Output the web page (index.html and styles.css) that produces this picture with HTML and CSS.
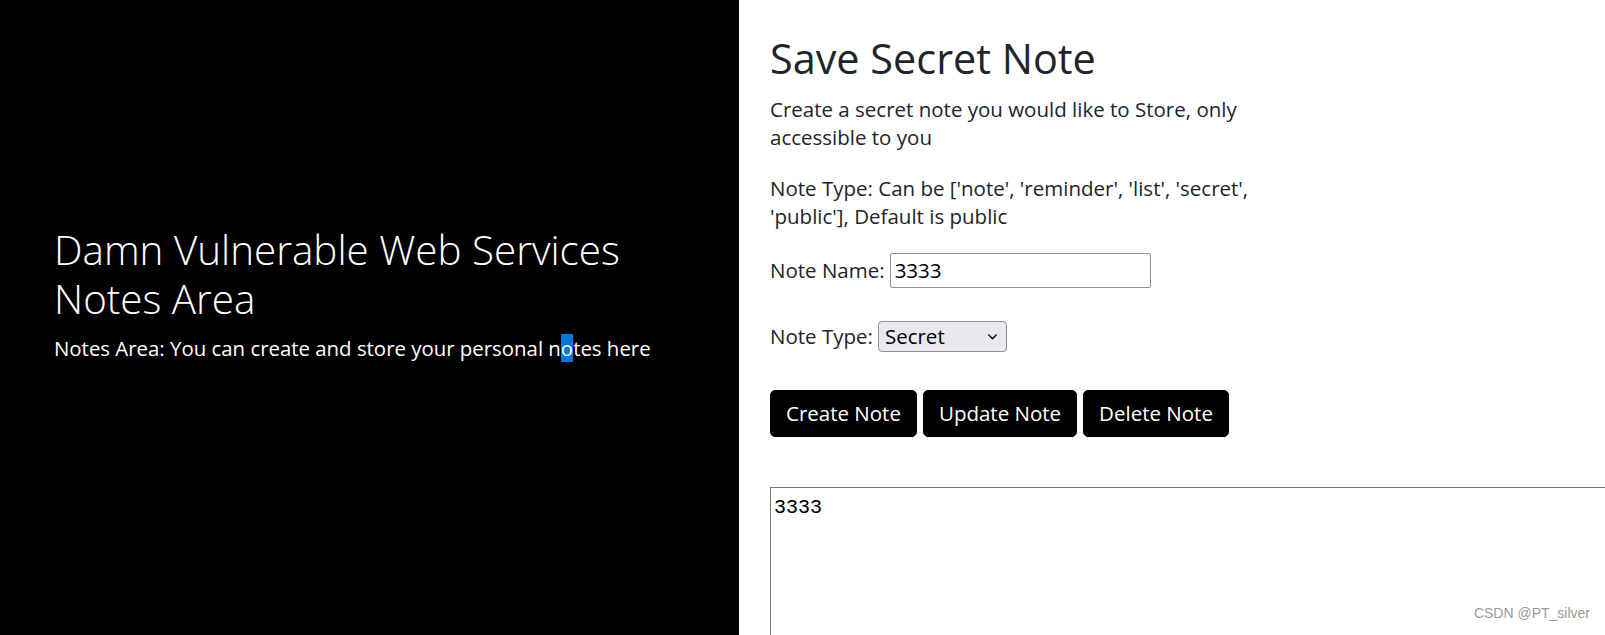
FILE: index.html
```html
<!DOCTYPE html>
<html>
<head>
  <link rel="stylesheet" href="styles.css">
</head>
<body>
  <div class="page">
    <div class="hero">
      <h1 class="hero-title">Damn Vulnerable Web Services Notes Area</h1>
      <p class="hero-lead">Notes Area: You can create and store your personal n<span class="sel">o</span>tes here</p>
    </div>

    <div class="main">
      <h2 class="title">Save Secret Note</h2>
      <p class="intro">Create a secret note you would like to Store, only accessible to you</p>
      <p class="intro">Note Type: Can be ['note', 'reminder', 'list', 'secret', 'public'], Default is public</p>

      <form class="note-form" onsubmit="return false">
        <div class="field">
          <label for="noteName">Note Name:</label>
          <input type="text" id="noteName" class="text-input" value="3333">
        </div>
        <div class="field field-type">
          <label for="noteType">Note Type:</label>
          <div class="select-wrap">
            <select id="noteType" class="select">
              <option value="note">Note</option>
              <option value="reminder">Reminder</option>
              <option value="list">List</option>
              <option value="secret" selected>Secret</option>
              <option value="public">Public</option>
            </select>
            <svg class="chevron" viewBox="0 0 12 12">
              <path d="M2.5 4.5l3.5 3.5 3.5-3.5"/>
            </svg>
          </div>
        </div>
        <div class="actions">
          <button class="btn">Create Note</button>
          <button class="btn">Update Note</button>
          <button class="btn">Delete Note</button>
        </div>
        <textarea class="note-body">3333</textarea>
      </form>
    </div>
  </div>

  <div class="watermark">CSDN @PT_silver</div>
</body>
</html>
```

FILE: styles.css
```css
* {
  box-sizing: border-box;
}

html,
body {
  height: 100%;
}

body {
  margin: 0;
  overflow: hidden;
  font-family: "Open Sans", "Noto Sans", sans-serif;
  font-size: 20.5px;
  line-height: 28.5px;
  color: #212529;
  background: #ffffff;
}

.page {
  display: flex;
  height: 100%;
}

/* left black panel */
.hero {
  flex: 0 0 739px;
  background: #000000;
  color: #ffffff;
  padding: 225px 40px 0 54px;
}

.hero-title {
  margin: 0 0 12px;
  font-size: 40.4px;
  font-weight: 300;
  line-height: 49px;
}

.hero-lead {
  margin: 0;
  font-size: 20.4px;
  line-height: 27px;
}

.sel {
  background: #0078d7;
  color: #ffffff;
}

/* right column */
.main {
  flex: 1;
  padding: 34px 0 0 31px;
}

.title {
  margin: 0 0 11px;
  font-size: 41.4px;
  font-weight: 400;
  line-height: 1.2;
}

.intro {
  width: 520px;
  margin: 0 0 22px;
}

.field {
  display: flex;
  align-items: center;
  gap: 5px;
  margin-bottom: 33px;
}

.text-input {
  width: 261px;
  height: 35px;
  padding: 0 4px;
  border: 1px solid #8f8f9d;
  border-radius: 2px;
  font-family: inherit;
  font-size: 20.5px;
  color: #000000;
}

.select-wrap {
  position: relative;
}

.select {
  appearance: none;
  width: 129px;
  height: 31px;
  padding: 0 6px;
  border: 1px solid #8f8f9d;
  border-radius: 4px;
  background: #e9e9ed;
  font-family: inherit;
  font-size: 20.5px;
  color: #000000;
}

.chevron {
  position: absolute;
  right: 8px;
  top: 9px;
  width: 13px;
  height: 13px;
  fill: none;
  stroke: #000000;
  stroke-width: 1.3;
  stroke-linecap: round;
  stroke-linejoin: round;
  pointer-events: none;
}

.field-type {
  margin-bottom: 38px;
}

.actions {
  display: flex;
  gap: 6px;
}

.btn {
  padding: 8px 15px;
  border: 1px solid #000000;
  border-radius: 5px;
  background: #000000;
  color: #ffffff;
  font-family: inherit;
  font-size: 20.5px;
  line-height: 29px;
  cursor: pointer;
}

.note-body {
  display: block;
  width: 1000px;
  height: 300px;
  margin-top: 50px;
  padding: 6px 3px;
  border: 1px solid #767676;
  border-radius: 0;
  font-family: "Liberation Mono", monospace;
  font-size: 20px;
  line-height: 28.5px;
  color: #000000;
  resize: none;
}

.watermark {
  position: absolute;
  right: 15px;
  bottom: 8px;
  font-family: "Liberation Sans", Arial, sans-serif;
  font-size: 14px;
  color: #9a9a9a;
}
```
